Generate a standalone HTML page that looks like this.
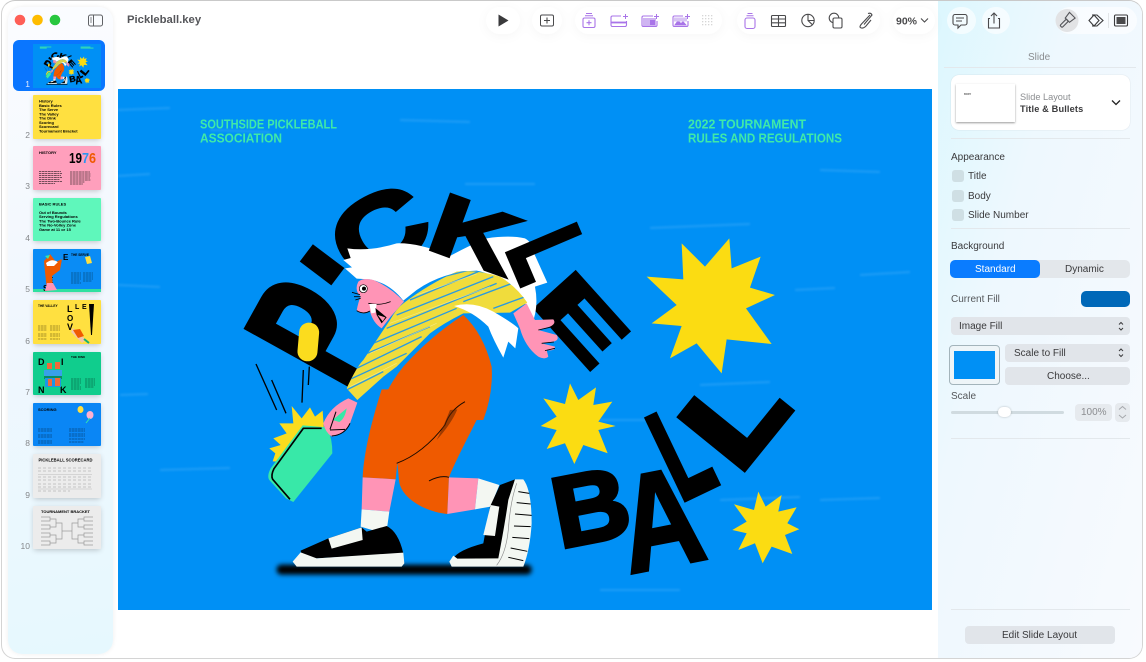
<!DOCTYPE html>
<html><head><meta charset="utf-8">
<style>
html,body{margin:0;padding:0;width:1146px;height:662px;overflow:hidden;background:#fff;font-family:"Liberation Sans",sans-serif;}
#win{position:absolute;left:1px;top:0;width:1142px;height:659px;border:1px solid #d4d4d4;border-top-color:#c9c9c9;border-radius:14px;background:#fff;overflow:hidden;box-sizing:border-box;}
#side{position:absolute;left:6px;top:6px;width:105px;height:647px;border-radius:14px;background:linear-gradient(170deg,#fbfcff 0%,#f1f7fe 45%,#e6f8fe 100%);box-shadow:0 0 5px rgba(0,0,0,.07);}
#right{position:absolute;left:936px;top:0;width:206px;height:659px;background:linear-gradient(105deg,#dcf7fe 0%,#eef8fe 35%,#f8fafe 100%);}
svg{position:absolute;left:0;top:0;}
.t{position:absolute;color:#3a3a3c;font-size:10px;white-space:nowrap;line-height:12px;}
.b{position:absolute;background:#e1e5ea;border-radius:4px;}
.d{position:absolute;height:1px;background:#e3e8ec;}
.c{position:absolute;left:952px;width:12px;height:12px;background:#cfdfe4;border-radius:3px;}
</style></head>
<body>
<div id="win"><div id="side"></div><div id="right"></div></div>

<!-- right panel -->
<div class="t" style="left:1028px;top:52px;color:#8b8d90;">Slide</div>
<div class="d" style="left:944px;top:67px;width:192px;"></div>
<div style="position:absolute;left:951px;top:75px;width:179px;height:55px;background:#fff;border-radius:8px;box-shadow:0 0 1px rgba(0,0,0,.18);"></div>
<div style="position:absolute;left:956px;top:84px;width:59px;height:38px;background:#fff;box-shadow:0 1px 2px rgba(0,0,0,.4);"></div>
<div class="t" style="left:1020px;top:91px;color:#8b8d90;font-size:9.2px;">Slide Layout</div>
<div class="t" style="left:1020px;top:103px;font-weight:bold;font-size:9.2px;letter-spacing:.15px;">Title &amp; Bullets</div>
<div class="d" style="left:951px;top:138px;width:179px;"></div>
<div class="t" style="left:951px;top:152px;">Appearance</div>
<div class="c" style="top:170px;"></div><div class="t" style="left:968px;top:171px;">Title</div>
<div class="c" style="top:190px;"></div><div class="t" style="left:968px;top:191px;">Body</div>
<div class="c" style="top:209px;"></div><div class="t" style="left:968px;top:210px;">Slide Number</div>
<div class="d" style="left:951px;top:228px;width:179px;"></div>
<div class="t" style="left:951px;top:241px;">Background</div>
<div class="b" style="left:951px;top:260px;width:179px;height:18px;background:#e3e7eb;border-radius:5px;"></div>
<div class="b" style="left:950px;top:260px;width:90px;height:18px;background:#0a7cff;border-radius:5px;"></div>
<div class="t" style="left:975px;top:264px;color:#fff;">Standard</div>
<div class="t" style="left:1065px;top:264px;">Dynamic</div>
<div class="t" style="left:951px;top:294px;color:#55585b;">Current Fill</div>
<div class="b" style="left:1081px;top:291px;width:49px;height:16px;background:#0068b8;border-radius:5px;"></div>
<div class="b" style="left:951px;top:317px;width:179px;height:18px;"></div>
<div class="t" style="left:959px;top:321px;">Image Fill</div>
<div style="position:absolute;left:949px;top:345px;width:49px;height:38px;border:1.5px solid #a3b4bb;border-radius:4px;background:#eef5f8;"></div>
<div style="position:absolute;left:954px;top:351px;width:41px;height:28px;background:#0090f5;"></div>
<div class="b" style="left:1005px;top:344px;width:125px;height:18px;"></div>
<div class="t" style="left:1014px;top:348px;">Scale to Fill</div>
<div class="b" style="left:1005px;top:367px;width:125px;height:18px;"></div>
<div class="t" style="left:1047px;top:371px;">Choose...</div>
<div class="t" style="left:951px;top:391px;color:#55585b;">Scale</div>
<div style="position:absolute;left:951px;top:411px;width:113px;height:3px;background:#d0dbe0;border-radius:2px;"></div>
<div style="position:absolute;left:998px;top:407px;width:13px;height:10px;background:#fff;border-radius:5px;box-shadow:0 0 2px rgba(0,0,0,.25);"></div>
<div class="b" style="left:1075px;top:404px;width:37px;height:17px;background:#e6eaee;"></div>
<div class="t" style="left:1081px;top:407px;color:#8b8d90;">100%</div>
<div class="b" style="left:1115px;top:403px;width:15px;height:19px;background:#e6eaee;"></div>
<div class="d" style="left:951px;top:438px;width:179px;"></div>
<div class="d" style="left:951px;top:609px;width:179px;"></div>
<div class="b" style="left:965px;top:626px;width:150px;height:18px;"></div>
<div class="t" style="left:1002px;top:630px;">Edit Slide Layout</div>

<!-- title -->
<div style="position:absolute;left:127px;top:13px;font-size:11.3px;line-height:14px;font-weight:bold;color:#55565a;">Pickleball.key</div>

<!-- selected thumb bg -->
<div style="position:absolute;left:13px;top:40px;width:92px;height:51px;background:#0a76ff;border-radius:6px;"></div>

<svg width="1146" height="662" viewBox="0 0 1146 662" xmlns="http://www.w3.org/2000/svg" font-family="Liberation Sans, sans-serif">
<defs>
<filter id="sh" x="-30%" y="-30%" width="160%" height="160%"><feGaussianBlur stdDeviation="3"/></filter>
<filter id="bl" x="-10%" y="-100%" width="120%" height="300%"><feGaussianBlur stdDeviation="7"/></filter>
<filter id="st" x="-5%" y="-5%" width="110%" height="110%"><feGaussianBlur stdDeviation="1"/></filter>
<clipPath id="shirtclip"><path d="M350,625 Q380,560 400,540 L480,420 Q500,385 520,370 Q600,310 680,275 Q740,268 810,290 Q860,320 892,368 L840,398 L700,400 Q640,430 600,460 L500,560 L460,590 L382,660 Z"/></clipPath>
<clipPath id="slideclip"><rect x="118" y="89" width="814" height="521"/></clipPath>
<g id="fig">
  <!-- shadow -->
  <g transform="translate(250,390) scale(.3333)">
    <rect x="80" y="524" width="765" height="30" rx="14" fill="#000" filter="url(#bl)"/>
  </g>
  <!-- ball & motion lines -->
  <g transform="translate(230,180) scale(.3333)">
    <rect x="205" y="428" width="60" height="116" rx="29" transform="rotate(5 235 485)" fill="#fbdc1e"/>
    <g stroke="#000" stroke-width="4" fill="none">
      <path d="M78,552 L140,690 M125,600 L168,700 M220,570 L216,668 M238,560 L235,615"/>
    </g>
    <!-- hair -->
    <path fill="#fff" d="M340,240 L362,234 L352,205 Q420,215 500,190 Q570,188 660,228 Q720,195 770,175 Q840,165 885,175 Q905,185 910,215 L952,308 L915,320 Q925,370 912,415 L880,360 Q810,285 740,272 Q640,275 560,330 L520,362 Q480,310 420,298 L380,296 L345,265 L366,262 Z"/>
    <!-- face -->
    <path fill="#ff94b6" d="M385,305 Q400,292 430,300 Q480,320 522,365 L482,410 L455,445 Q430,430 420,395 Q392,405 380,392 Q385,365 392,350 Q372,330 385,305 Z"/>
    <circle cx="400" cy="326" r="12" fill="#fff" stroke="#000" stroke-width="2"/>
    <circle cx="402" cy="326" r="6" fill="#000"/>
    <path d="M366,337 L390,344 M372,350 L392,350 M376,360 L392,355 M380,392 Q400,405 420,393 M415,370 Q450,378 482,365" stroke="#000" stroke-width="2.5" fill="none"/>
    <path fill="#fff" d="M418,372 L440,372 L436,398 L424,400 Z"/>
    <path fill="#000" d="M436,384 L470,412 L455,430 L440,405 Z"/>
    <path fill="#ff94b6" d="M443,405 L466,412 L458,424 Z"/>
    <!-- arm right -->
    <path fill="#ff94b6" d="M850,400 L890,370 Q905,400 915,420 L970,418 Q980,430 960,440 L925,450 L980,465 Q990,480 970,485 L935,490 L975,500 Q975,515 950,510 L955,530 Q945,540 925,530 Q885,500 870,445 Z"/>
    <path fill="none" stroke="#000" stroke-width="2.5" d="M925,450 L960,442 M935,490 L972,486 M945,512 L975,505"/>
    <!-- shirt -->
    <g clip-path="url(#shirtclip)">
      <rect x="340" y="260" width="560" height="410" fill="#f0dc3c"/>
      <g stroke="#2a9ae0" stroke-width="4" fill="none">
        <path d="M330,640 L460,575 M345,605 L530,520 M380,565 L575,470 M400,525 L600,440 M430,490 L680,385 M470,445 L800,310 M500,405 L790,290 M540,360 L745,275 M790,385 L900,345 M700,365 L860,305 M600,300 L720,270"/>
      </g>
      <g stroke="#f7eea0" stroke-width="2" fill="none" opacity=".7">
        <path d="M360,620 L500,550 M420,520 L620,430 M480,430 L780,320 M560,345 L740,282"/>
      </g>
    </g>
    <!-- back tuft of hair -->
    <path fill="#fff" d="M672,378 Q730,362 790,395 Q850,430 865,445 L856,505 L835,485 L820,533 Q790,480 775,440 Q730,395 672,378 Z"/>
    <!-- pants upper -->
    <path fill="#ef5a00" d="M434,720 Q470,620 520,560 Q600,470 700,405 Q760,460 785,560 Q790,640 760,720 Z"/>
  </g>
  <g transform="translate(250,390) scale(.3333)">
    <!-- paddle star -->
    <path fill="#fbdc1e" d="M68,214 L76,190 L58,175 L92,165 L70,145 L110,130 L88,100 L130,100 L125,48 L155,85 L180,52 L195,80 L218,62 L222,120 L160,125 L100,215 Z"/>
    <!-- paddle -->
    <path fill="#38e8a8" d="M158,106 L232,112 Q248,150 247,190 L130,336 L108,325 L58,270 Q50,258 62,235 Z"/>
    <path fill="none" stroke="#000" stroke-width="5" d="M120,328 L68,268 Q62,256 72,236 L160,115 L215,115"/>
    <!-- hand -->
    <path fill="#ff94b6" d="M220,100 Q240,50 295,25 L322,38 L300,100 Q280,135 245,140 Q225,125 220,100 Z"/>
    <path fill="#38e8a8" d="M248,90 L290,55 Q285,85 268,96 Z"/>
    <path fill="none" stroke="#000" stroke-width="3" d="M240,118 L258,65 M240,120 L285,118 M245,138 Q285,135 300,100"/>
    <!-- pants lower -->
    <path fill="#ef5a00" d="M395,-2 C360,110 342,190 338,262 L437,268 L442,218 L447,270 C450,320 520,365 592,372 L597,262 C630,180 690,80 722,-2 Z"/>
    <path fill="none" stroke="#1a0a00" stroke-width="3" d="M440,220 Q520,190 585,105 Q600,60 645,35"/>
    <path fill="#5a2000" opacity=".55" d="M600,60 L622,58 Q605,100 560,150 Q585,100 600,60 Z"/>
    <path fill="none" stroke="#1a0a00" stroke-width="3" d="M537,273 Q570,255 597,262"/>
    <!-- socks -->
    <path fill="#ff94b6" d="M338,262 L437,268 L418,365 L335,358 Z"/>
    <path fill="#f3f7f2" d="M335,358 L418,365 L412,408 L380,424 L332,410 Z"/>
    <path fill="#ff94b6" d="M597,262 L685,265 L675,358 L592,372 Z"/>
    <path fill="#f3f7f2" d="M685,265 L748,285 L722,350 L675,358 Z"/>
    <!-- left shoe -->
    <path fill="#000" d="M152,482 L235,445 L335,412 L350,425 L410,408 Q445,425 460,490 L200,505 L155,500 Z"/>
    <path fill="#f3f7f2" d="M235,445 L335,412 L338,450 L245,476 Z"/>
    <path fill="#f3f7f2" d="M128,515 L152,487 L200,505 L460,488 L463,520 L455,530 L140,530 Z"/>
    <!-- right shoe -->
    <path fill="#000" d="M610,505 Q625,480 700,460 L720,350 L750,285 L795,268 L775,350 L750,508 L620,508 Z"/>
    <path fill="#f3f7f2" d="M700,435 L722,345 L748,350 L735,438 Z"/>
    <path fill="#f3f7f2" d="M795,268 L820,268 Q845,300 845,400 Q840,480 820,530 L605,530 L598,515 L610,497 L622,506 L745,505 Q765,400 775,330 Z"/>
    <path fill="none" stroke="#000" stroke-width="3" d="M805,305 L838,310 M800,338 L842,342 M795,372 L845,376 M792,408 L842,410 M787,442 L838,446 M782,474 L832,484 M775,502 L820,512"/>
    <path fill="none" stroke="#8a8a8a" stroke-width="2" d="M800,280 Q780,340 775,420 Q768,490 740,526"/>
  </g>
  <!-- stars -->
  <g transform="translate(530,220) scale(.3333)" fill="#fbdc12">
    <path d="M350,170 L460,178 L455,70 L525,140 L598,55 L605,145 L692,110 L660,203 L735,225 L648,265 L725,372 L590,358 L575,460 L500,370 L420,415 L455,318 L365,310 L440,255 Z"/>
    <path d="M32,618 L80,590 L40,535 L105,552 L120,490 L145,540 L198,502 L190,555 L247,545 L205,605 L257,618 L205,630 L233,700 L160,675 L133,732 L105,670 L50,687 L80,630 Z"/>
    <path d="M607,930 L650,905 L612,853 L672,870 L685,815 L707,860 L755,825 L745,875 L800,862 L772,910 L808,928 L765,945 L787,1002 L725,980 L698,1030 L675,970 L625,990 L650,940 Z"/>
  </g>
</g>
</defs>

<!-- main slide -->
<g clip-path="url(#slideclip)">
<rect x="118" y="89" width="814" height="521" fill="#0090f5"/>
<g stroke="#9fd4fa" stroke-width="2" opacity=".2" fill="none" filter="url(#st)">
  <path d="M118,110 L170,108 M118,176 L150,174 M118,285 L160,287 M120,395 L148,394 M465,184 L535,184 M650,228 L750,224 M795,290 L835,288 M700,385 L770,382 M720,500 L800,497 M860,275 L910,272 M210,130 L270,132 M590,420 L650,420 M820,500 L880,498 M160,470 L230,468 M820,170 L880,172 M600,590 L680,590 M400,120 L470,122"/>
</g>
<g fill="#000" font-weight="bold" font-size="100" stroke="#000" stroke-linejoin="miter">
  <text x="-7" transform="translate(350,385) rotate(-61) scale(1.1,1.7)" stroke-width="4">P</text>
  <text x="-7" transform="translate(332,283) rotate(-53) scale(1.25,.55)" stroke-width="3">I</text>
  <text x="-5" transform="translate(360,281) rotate(-28) scale(1.3,1)" stroke-width="5">C</text>
  <text x="-7" transform="translate(537,310) rotate(48) scale(1.4,.78)" stroke-width="5">E</text>
  <text x="-7" transform="translate(567,547) rotate(-11) scale(1.06,1)" stroke-width="4">B</text>
  <text x="0" transform="translate(629,574) rotate(-11) scale(1.14,1.38)" stroke-width="2">A</text>
  <text x="-7" transform="translate(685,499) rotate(-25.5) scale(.72,1.28)" stroke-width="5">L</text>
  <text x="-7" transform="translate(745,467) rotate(-51) scale(1.4,1.18)" stroke-width="6">L</text>
</g>
<use href="#fig"/>
<g fill="#000" font-weight="bold" font-size="100" stroke="#000">
  <text x="-7" transform="translate(432,250) rotate(20) scale(1.2,.85)" stroke-width="4">K</text>
  <text x="-7" transform="translate(508,253) rotate(67) scale(.7,1.06)" stroke-width="5">L</text>
</g>
<g fill="#3fe9a8" font-weight="bold" font-size="12.5">
  <text x="200" y="128.500" textLength="137" lengthAdjust="spacingAndGlyphs">SOUTHSIDE PICKLEBALL</text>
  <text x="200" y="142.500" textLength="82" lengthAdjust="spacingAndGlyphs">ASSOCIATION</text>
  <text x="688" y="128.500" textLength="118" lengthAdjust="spacingAndGlyphs">2022 TOURNAMENT</text>
  <text x="688" y="142.500" textLength="154" lengthAdjust="spacingAndGlyphs">RULES AND REGULATIONS</text>
</g>
</g>

<!-- traffic lights -->
<circle cx="20" cy="20" r="5.3" fill="#fe5f57"/><circle cx="37.500" cy="20" r="5.3" fill="#febc00"/><circle cx="55" cy="20" r="5.3" fill="#28c73f"/>
<g fill="none" stroke="#606266" stroke-width="1"><rect x="88.500" y="15" width="14" height="11" rx="2"/><path d="M93.500,15 V26"/></g>
<path d="M90,18 h2 M90,20 h2 M90,22 h2" stroke="#606266" stroke-width=".8"/>

<!-- thumb shadows -->
<g fill="#000" opacity=".22" filter="url(#sh)" transform="translate(0,1)">
  <rect x="34" y="96" width="66" height="43"/><rect x="34" y="147" width="66" height="43"/><rect x="34" y="199" width="66" height="42"/><rect x="34" y="250" width="66" height="42"/><rect x="34" y="301" width="66" height="43"/><rect x="34" y="353" width="66" height="42"/><rect x="34" y="404" width="66" height="42"/><rect x="34" y="455" width="66" height="43"/><rect x="34" y="507" width="66" height="42"/>
</g>
<!-- thumb 1 -->
<rect x="33" y="44" width="68" height="44" fill="#0090f5"/>
<g transform="translate(33,44) scale(.08354) translate(-118,-89)">
  <g fill="#000" font-weight="bold" font-size="100" stroke="#000">
  <text x="-7" transform="translate(350,385) rotate(-61) scale(1.1,1.7)" stroke-width="4">P</text>
  <text x="-7" transform="translate(332,283) rotate(-53) scale(1.25,.55)" stroke-width="3">I</text>
  <text x="-5" transform="translate(360,281) rotate(-28) scale(1.3,1)" stroke-width="5">C</text>
  <text x="-7" transform="translate(432,250) rotate(20) scale(1.2,.85)" stroke-width="4">K</text>
  <text x="-7" transform="translate(508,253) rotate(67) scale(.7,1.06)" stroke-width="5">L</text>
  <text x="-7" transform="translate(537,310) rotate(48) scale(1.4,.78)" stroke-width="5">E</text>
  <text x="-7" transform="translate(567,547) rotate(-11) scale(1.06,1)" stroke-width="4">B</text>
  <text x="0" transform="translate(629,574) rotate(-11) scale(1.14,1.38)" stroke-width="2">A</text>
  <text x="-7" transform="translate(685,499) rotate(-25.5) scale(.72,1.28)" stroke-width="5">L</text>
  <text x="-7" transform="translate(745,467) rotate(-51) scale(1.4,1.18)" stroke-width="6">L</text>
  </g>
  <use href="#fig"/>
  <path d="M200,125 H337 M200,138 H282 M688,125 H806 M688,138 H842" stroke="#3fe9a8" stroke-width="10"/>
</g>
<!-- thumb 2 -->
<rect x="33" y="95" width="68" height="44" rx="1" fill="#ffe040"/>
<g font-weight="bold" font-size="4" fill="#000">
<text x="39" y="102.500">History</text><text x="39" y="106.800">Basic Rules</text><text x="39" y="111">The Serve</text><text x="39" y="115.300">The Valley</text><text x="39" y="119.500">The Dink</text><text x="39" y="123.800">Scoring</text><text x="39" y="128">Scorecard</text><text x="39" y="132.300">Tournament Bracket</text>
</g>
<!-- thumb 3 -->
<rect x="33" y="146" width="68" height="44" rx="1" fill="#ff9fbc"/>
<text x="39" y="154" font-size="4" font-weight="bold">HISTORY</text>
<text x="69" y="163" font-size="15" font-weight="bold" textLength="13" lengthAdjust="spacingAndGlyphs">19</text>
<text x="82" y="163" font-size="15" font-weight="bold" fill="#2d95ee" textLength="7" lengthAdjust="spacingAndGlyphs">7</text>
<text x="89" y="163" font-size="15" font-weight="bold" fill="#ef5a00" textLength="7" lengthAdjust="spacingAndGlyphs">6</text>
<g stroke="#3a2a30" stroke-width=".9" stroke-dasharray="2 .6 3 .5" opacity=".7">
<path d="M39,171.500 H61 M39,173.500 H62 M39,175.500 H61 M39,177.500 H62 M39,179.500 H60 M39,181.500 H62 M39,183.500 H55 M70,172 H90 M70,174 H91 M70,176 H91 M70,178 H90 M70,180 H91 M70,182 H85 M70,184 H83"/>
</g>
<!-- thumb 4 -->
<rect x="33" y="198" width="68" height="43" rx="1" fill="#5ff7bb"/>
<g font-weight="bold" font-size="4" fill="#000">
<text x="39" y="205.500">BASIC RULES</text>
<text x="39" y="214">Out of Bounds</text><text x="39" y="218.200">Serving Regulations</text><text x="39" y="222.400">The Two-Bounce Rule</text><text x="39" y="226.600">The No-Volley Zone</text><text x="39" y="230.800">Game at 11 or 15</text>
</g>
<!-- thumb 5 -->
<rect x="33" y="249" width="68" height="43" rx="1" fill="#0a8cf5"/>
<rect x="33" y="289" width="68" height="3" fill="#2fe0a0"/>
<g font-weight="bold" fill="#000">
<text x="71" y="256" font-size="3.200">THE SERVE</text>
<text x="63" y="260" font-size="8">E</text><text x="57" y="266" font-size="7">V</text><text x="48" y="283" font-size="8">E</text><text x="43" y="291" font-size="8">S</text>
</g>
<path d="M44,261 L50,254 L56,262 L62,259 L60,270 L52,276 L53,288 L47,290 L45,272 Z" fill="#ef5a00"/>
<path d="M46,263 Q52,258 58,262 L54,266 L47,266 Z" fill="#fff"/>
<path d="M47,283 L53,283 L57,290 L45,291 Z" fill="#ff94b6"/>
<path d="M45,256 L50,255 L48,259 Z" fill="#38e8a8"/><path d="M85,257 L90,256 L92,263 L87,264 Z" fill="#ffe040"/>
<g stroke="#04304f" stroke-width=".8" stroke-dasharray="2 .6 3 .5" opacity=".7"><path d="M71,273 H81 M71,275 H81 M71,277 H81 M71,279 H81 M71,281 H80 M71,283 H81 M83,273 H93 M83,275 H93 M83,277 H93 M83,279 H93 M83,281 H92"/></g>
<!-- thumb 6 -->
<rect x="33" y="300" width="68" height="44" rx="1" fill="#ffe040"/>
<g font-weight="bold" fill="#000">
<text x="38" y="307" font-size="3.200">THE VALLEY</text>
<text x="67" y="312" font-size="9">L</text><text x="75" y="309" font-size="7">L</text><text x="82" y="309" font-size="7">E</text>
<text x="67" y="321" font-size="8">O</text><text x="67" y="330" font-size="9">V</text>
<path d="M89,304 H94 L92,335 L91,335 Z"/>
</g>
<path d="M73,328 L86,340 L82,343 L71,332 Z" fill="#f3c6a8"/><path d="M73,330 L80,329 L84,336 L78,338 Z" fill="#ef5a00"/><path d="M84,339 L89,343" stroke="#18b070" stroke-width="2"/>
<g stroke="#5a4b10" stroke-width=".8" stroke-dasharray="2 .6 3 .5" opacity=".7"><path d="M38,326 H47 M38,328 H47 M38,330 H47 M38,334 H47 M38,336 H47 M38,339 H47 M50,326 H60 M50,328 H60 M50,330 H60 M50,334 H60 M50,336 H60 M50,339 H60"/></g>
<!-- thumb 7 -->
<rect x="33" y="352" width="68" height="43" rx="1" fill="#10cd8d"/>
<g font-weight="bold" fill="#000">
<text x="38" y="365" font-size="9">D</text><text x="61" y="365" font-size="9">I</text><text x="38" y="393" font-size="9">N</text><text x="60" y="393" font-size="9">K</text>
<text x="71" y="358" font-size="3">THE DINK</text>
</g>
<rect x="44" y="370" width="18" height="7" fill="#38a0e8"/><rect x="44" y="376" width="18" height="3" fill="#0a8c60"/><rect x="45" y="378" width="16" height="9" fill="#1c96e6"/>
<path d="M47,363 h5 v6 h-5z M55,362 h5 v7 h-5z M48,379 h4 v7 h-4z M55,378 h5 v8 h-5z" fill="#ef6a3a"/>
<g stroke="#053f2c" stroke-width=".8" stroke-dasharray="2 .6 3 .5" opacity=".7"><path d="M71,379 H81 M71,381 H81 M71,383 H81 M71,385 H80 M71,387 H81 M71,389 H81 M85,379 H95 M85,381 H95 M85,383 H95 M85,385 H95 M85,387 H94"/></g>
<!-- thumb 8 -->
<rect x="33" y="403" width="68" height="43" rx="1" fill="#0a86f5"/>
<text x="38" y="411" font-size="4" font-weight="bold">SCORING</text>
<ellipse cx="80.500" cy="409.500" rx="3" ry="3.500" fill="#ffe040"/><ellipse cx="90" cy="415" rx="3.500" ry="4" fill="#ffb0d0"/><path d="M90,418 L86,423" stroke="#38e8a8" stroke-width="1"/>
<g stroke="#052b50" stroke-width=".8" stroke-dasharray="2 .6 3 .5" opacity=".7"><path d="M38,429 H52 M38,431 H52 M38,435 H52 M38,437 H52 M38,441 H52 M38,443 H52 M69,429 H85 M69,431 H85 M69,434 H85 M69,436 H85 M69,439 H85 M69,442 H84"/></g>
<!-- thumb 9 -->
<rect x="33" y="454" width="68" height="44" rx="1" fill="#ececec"/>
<text x="38.500" y="461.500" font-size="4.200" font-weight="bold" textLength="54" lengthAdjust="spacingAndGlyphs">PICKLEBALL SCORECARD</text>
<g stroke="#8a8a8a" stroke-width=".6" stroke-dasharray="3 2" opacity=".8"><path d="M38,468 H92 M38,471 H92 M38,477 H92 M38,480 H92 M38,484 H92 M38,487 H92 M38,491 H70"/></g>
<path d="M38,474.500 H92 M38,489 H92" stroke="#bbb" stroke-width=".5"/>
<!-- thumb 10 -->
<rect x="33" y="506" width="68" height="43" rx="1" fill="#ececec"/>
<text x="41" y="513" font-size="4" font-weight="bold" textLength="49" lengthAdjust="spacingAndGlyphs">TOURNAMENT BRACKET</text>
<g fill="none" stroke="#9a9a9a" stroke-width=".7">
<path d="M41,517 H50 V521 H41 M50,519 H56 V527 H50 M41,525 H50 V529 H41 M41,533 H50 V537 H41 M50,535 H56 V543 H50 M41,541 H50 V545 H41 M56,523 H62 V539 H56 M62,531 H72"/>
<path d="M93,517 H84 V521 H93 M84,519 H78 V527 H84 M93,525 H84 V529 H93 M93,533 H84 V537 H93 M84,535 H78 V543 H84 M93,541 H84 V545 H93 M78,523 H72 V539 H78"/>
</g>
<!-- numbers -->
<g font-size="8.500" fill="#85888b" text-anchor="end">
<text x="30" y="87" fill="#dfeaff">1</text><text x="30" y="138">2</text><text x="30" y="189">3</text><text x="30" y="241">4</text><text x="30" y="292">5</text><text x="30" y="344">6</text><text x="30" y="395">7</text><text x="30" y="446">8</text><text x="30" y="498">9</text><text x="30" y="549">10</text>
</g>

<!-- toolbar pills -->
<g fill="#fff" style="filter:drop-shadow(0 2px 5px rgba(0,0,0,.035))">
<rect x="486" y="7" width="34" height="27" rx="13.500"/><rect x="532" y="7" width="30" height="27" rx="13.500"/><rect x="575" y="7" width="147" height="27" rx="13.500"/><rect x="737" y="7" width="143" height="27" rx="13.500"/><rect x="893" y="7" width="42" height="27" rx="13.500"/></g>
<g fill="#fff" fill-opacity=".6"><rect x="947" y="7" width="29" height="27" rx="13.500"/><rect x="982" y="7" width="28" height="27" rx="13.500"/><rect x="1056" y="7" width="81" height="27" rx="13.500"/>
</g>
<circle cx="1067" cy="20.500" r="11.500" fill="#e2e3e5"/>
<!-- play -->
<path d="M498.500,14.500 L508.500,20.500 L498.500,26.500 Z" fill="#3a3a3c"/>
<!-- add slide -->
<g fill="none" stroke="#4a4a4c" stroke-width="1"><rect x="540.500" y="15" width="13" height="11" rx="1.500"/><path d="M547,17.500 V23.500 M544,20.500 H550" stroke-width="1.100"/></g>
<!-- purple insert icons -->
<g fill="none" stroke="#a974e8" stroke-width="1.100">
  <rect x="583" y="18" width="12" height="9.500" rx="1.500"/><path d="M585,15.700 H593 M586,13.500 H592" stroke-width="1"/>
  <path d="M589,20.200 V25.200 M586.500,22.700 H591.500"/>
  <path d="M621,16 H612.500 A1.500,1.500 0 0 0 611,17.500 V25 A1.500,1.500 0 0 0 612.500,26.500 H625 A1.500,1.500 0 0 0 626.500,25 V21"/><path d="M611,22.500 H626.500" stroke-width="1.800"/>
  <path d="M653,16 H643 A1.500,1.500 0 0 0 642,17.500 V25 A1.500,1.500 0 0 0 643,26.500 H656 A1.500,1.500 0 0 0 657,25 V21"/>
  <path d="M683,16 H674 A1.500,1.500 0 0 0 673,17.500 V25 A1.500,1.500 0 0 0 674,26.500 H687 A1.500,1.500 0 0 0 688,25 V21"/>
  <path d="M625.500,14 V19 M623,16.500 H628 M656.500,14 V19 M654,16.500 H659 M687.500,14 V19 M685,16.500 H690" stroke-width="1"/>
  <rect x="745" y="18" width="10" height="10.500" rx="2"/><path d="M746.500,15.700 H753.500 M747.500,13.500 H752.500" stroke-width="1"/>
</g>
<rect x="643" y="18" width="13" height="8" fill="#cfb4f2"/><rect x="650" y="20" width="5" height="5" fill="#a974e8"/>
<path d="M674,25.500 L678,20 L681,23 L683,21 L687,25.500 Z" fill="#a974e8"/><rect x="674" y="17.500" width="13" height="4" fill="#d8c4f4"/>
<g fill="#d6d6d6"><rect x="702" y="15" width="1.300" height="1.300"/><rect x="705" y="15" width="1.300" height="1.300"/><rect x="708" y="15" width="1.300" height="1.300"/><rect x="711" y="15" width="1.300" height="1.300"/><rect x="702" y="18" width="1.300" height="1.300"/><rect x="705" y="18" width="1.300" height="1.300"/><rect x="708" y="18" width="1.300" height="1.300"/><rect x="711" y="18" width="1.300" height="1.300"/><rect x="702" y="21" width="1.300" height="1.300"/><rect x="705" y="21" width="1.300" height="1.300"/><rect x="708" y="21" width="1.300" height="1.300"/><rect x="711" y="21" width="1.300" height="1.300"/><rect x="702" y="24" width="1.300" height="1.300"/><rect x="705" y="24" width="1.300" height="1.300"/><rect x="708" y="24" width="1.300" height="1.300"/><rect x="711" y="24" width="1.300" height="1.300"/></g>
<!-- table, chart, shape, clip -->
<g fill="none" stroke="#4a4a4c" stroke-width="1.100">
  <rect x="771.500" y="15.500" width="14" height="11" rx="1"/><path d="M771.500,19 H785.500 M771.500,22.800 H785.500 M778.500,15.500 V26.500"/>
  <circle cx="808" cy="20.500" r="6.200"/><path d="M808,14.300 V20.500 L812.500,24.800 M808,20.500 H814"/>
  <circle cx="834" cy="18" r="4.800"/><rect x="833" y="18" width="9" height="10" rx="1.500" fill="#fff"/>
  <path d="M870,15 L861.500,24 Q858.500,27.500 861.500,28 Q863.500,28.500 866,26 L871,20 M868,13.500 Q871,12.500 872,15 L864,24.500"/>
</g>
<text x="896" y="24.500" font-size="10.500" font-weight="bold" fill="#4a4a4c">90%</text>
<path d="M921,18.500 L924.500,22 L928,18.500" fill="none" stroke="#4a4a4c" stroke-width="1.100"/>
<!-- comment, share -->
<g fill="none" stroke="#4a4a4c" stroke-width="1.100">
  <path d="M955,14.500 H965 A2,2 0 0 1 967,16.500 V23 A2,2 0 0 1 965,25 H961 L958,28 V25 H955 A2,2 0 0 1 953,23 V16.500 A2,2 0 0 1 955,14.500 Z"/><path d="M956,18 H964 M956,21 H962" stroke-width=".9"/>
  <path d="M990,18.500 H988.500 V28 H999.500 V18.500 H998 M994,23.500 V13 M991,16 L994,13 L997,16"/>
  <path d="M1089,20.500 L1094,15 L1099,20.500 L1094,26 Z M1092,15 L1097,15 L1103,20.500 L1097,26 L1092,26" stroke="#3a3a3c"/>
</g>
<!-- hammer/format -->
<g transform="rotate(45 1067 20.500)" fill="none" stroke="#55565a" stroke-width="1.100">
  <path d="M1063,13 H1071 L1070,20 H1064 Z"/><rect x="1065.500" y="20" width="3" height="9" rx="1.200"/>
</g>
<path d="M1108.500,13 V28" stroke="#dcdfe2" stroke-width=".8"/>
<rect x="1114.500" y="15" width="13" height="11" rx="1.200" fill="none" stroke="#3a3a3c" stroke-width="1.100"/><rect x="1116.500" y="17" width="9" height="7" fill="#4a4a4c"/>

<!-- panel glyphs -->
<path d="M1112,100.500 L1116,104.500 L1120,100.500" fill="none" stroke="#222" stroke-width="1.300"/>
<g fill="none" stroke="#3a3a3c" stroke-width="1"><path d="M1119,324.500 L1121,322.500 L1123,324.500 M1119,328 L1121,330 L1123,328"/><path d="M1119,351 L1121,349 L1123,351 M1119,354.500 L1121,356.500 L1123,354.500"/></g>
<g fill="none" stroke="#a5a8ac" stroke-width="1"><path d="M1119,409.500 L1122.500,406.500 L1126,409.500 M1119,415 L1122.500,418 L1126,415"/></g>
<text x="964" y="95" font-size="2.500" font-weight="bold" fill="#555">BODY</text>
</svg>
</body></html>
